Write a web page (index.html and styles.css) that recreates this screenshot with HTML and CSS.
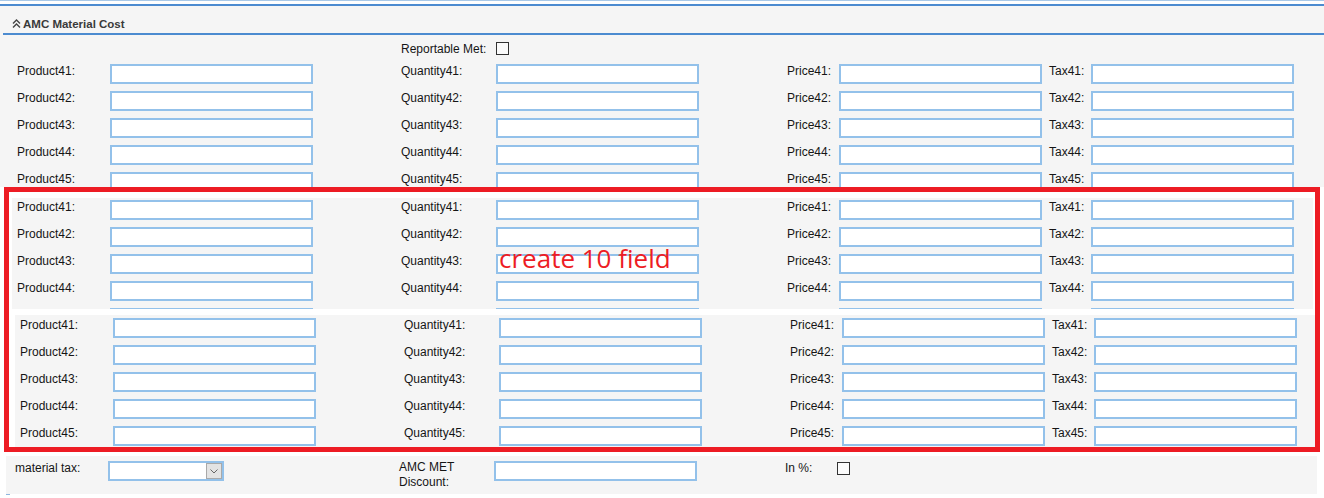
FILE: index.html
```html
<!DOCTYPE html>
<html>
<head>
<meta charset="utf-8">
<title>AMC Material Cost</title>
<link rel="stylesheet" href="styles.css">
</head>
<body>
<div class="topbar"></div>
<div class="section">
  <div class="hdr">
    <svg class="chev" width="9" height="9" viewBox="0 0 9 9"><path d="M1 4.5 L4.5 1 L8 4.5 M1 8.5 L4.5 5 L8 8.5" fill="none" stroke="#444" stroke-width="1.4"/></svg>
    <span>AMC Material Cost</span>
  </div>
  <div class="form-top">
    <div class="grid rep">
      <span class="lbl c3">Reportable Met:</span><span class="chk c4"></span>
    </div>
    <div class="grid">
      <span class="lbl">Product41:</span><span class="inp"></span><span class="lbl">Quantity41:</span><span class="inp"></span><span class="lbl">Price41:</span><span class="inp"></span><span class="lbl">Tax41:</span><span class="inp"></span>
      <span class="lbl">Product42:</span><span class="inp"></span><span class="lbl">Quantity42:</span><span class="inp"></span><span class="lbl">Price42:</span><span class="inp"></span><span class="lbl">Tax42:</span><span class="inp"></span>
      <span class="lbl">Product43:</span><span class="inp"></span><span class="lbl">Quantity43:</span><span class="inp"></span><span class="lbl">Price43:</span><span class="inp"></span><span class="lbl">Tax43:</span><span class="inp"></span>
      <span class="lbl">Product44:</span><span class="inp"></span><span class="lbl">Quantity44:</span><span class="inp"></span><span class="lbl">Price44:</span><span class="inp"></span><span class="lbl">Tax44:</span><span class="inp"></span>
      <span class="lbl">Product45:</span><span class="inp"></span><span class="lbl">Quantity45:</span><span class="inp"></span><span class="lbl">Price45:</span><span class="inp"></span><span class="lbl">Tax45:</span><span class="inp"></span>
    </div>
  </div>
</div>
<div class="redbox">
  <div class="panel pa">
    <div class="grid">
      <span class="lbl">Product41:</span><span class="inp"></span><span class="lbl">Quantity41:</span><span class="inp"></span><span class="lbl">Price41:</span><span class="inp"></span><span class="lbl">Tax41:</span><span class="inp"></span>
      <span class="lbl">Product42:</span><span class="inp"></span><span class="lbl">Quantity42:</span><span class="inp"></span><span class="lbl">Price42:</span><span class="inp"></span><span class="lbl">Tax42:</span><span class="inp"></span>
      <span class="lbl">Product43:</span><span class="inp"></span><span class="lbl">Quantity43:</span><span class="inp"></span><span class="lbl">Price43:</span><span class="inp"></span><span class="lbl">Tax43:</span><span class="inp"></span>
      <span class="lbl">Product44:</span><span class="inp"></span><span class="lbl">Quantity44:</span><span class="inp"></span><span class="lbl">Price44:</span><span class="inp"></span><span class="lbl">Tax44:</span><span class="inp"></span>
      <span class="lbl"></span><span class="inp"></span><span class="lbl"></span><span class="inp"></span><span class="lbl"></span><span class="inp"></span><span class="lbl"></span><span class="inp"></span>
    </div>
  </div>
  <div class="panel pb">
    <div class="grid">
      <span class="lbl">Product41:</span><span class="inp"></span><span class="lbl">Quantity41:</span><span class="inp"></span><span class="lbl">Price41:</span><span class="inp"></span><span class="lbl">Tax41:</span><span class="inp"></span>
      <span class="lbl">Product42:</span><span class="inp"></span><span class="lbl">Quantity42:</span><span class="inp"></span><span class="lbl">Price42:</span><span class="inp"></span><span class="lbl">Tax42:</span><span class="inp"></span>
      <span class="lbl">Product43:</span><span class="inp"></span><span class="lbl">Quantity43:</span><span class="inp"></span><span class="lbl">Price43:</span><span class="inp"></span><span class="lbl">Tax43:</span><span class="inp"></span>
      <span class="lbl">Product44:</span><span class="inp"></span><span class="lbl">Quantity44:</span><span class="inp"></span><span class="lbl">Price44:</span><span class="inp"></span><span class="lbl">Tax44:</span><span class="inp"></span>
      <span class="lbl">Product45:</span><span class="inp"></span><span class="lbl">Quantity45:</span><span class="inp"></span><span class="lbl">Price45:</span><span class="inp"></span><span class="lbl">Tax45:</span><span class="inp"></span>
    </div>
  </div>
  <div class="note">create 10 field</div>
</div>
<div class="bottom">
  <div class="grid">
    <span class="lbl">material tax:</span>
    <span class="sel"><span class="selbtn"><svg width="8" height="5" viewBox="0 0 8 5"><path d="M0.5 0.5 L4 4 L7.5 0.5" fill="none" stroke="#666" stroke-width="1"/></svg></span></span>
    <span class="lbl two">AMC MET<br>Discount:</span><span class="inp"></span>
    <span class="lbl">In %:</span><span class="chk low"></span>
  </div>
</div>
<div class="tick"></div>
</body>
</html>
```

FILE: styles.css
```css
html, body {
  margin: 0;
  padding: 0;
  background: #ffffff;
}
body {
  font-family: "Liberation Sans", Arial, sans-serif;
  font-size: 12px;
  color: #151515;
}
.topbar {
  height: 3px;
  border-top: 1px solid #a9c9e8;
  border-bottom: 2px solid #4c8bd0;
}
.section {
  background: #f5f5f5;
  height: 181px;
  overflow: hidden;
}
.hdr {
  margin-left: 3px;
  border-bottom: 2px solid #4c8bd0;
  display: flex;
  align-items: flex-start;
  padding-top: 11px;
  padding-left: 9px;
  box-sizing: border-box;
  height: 29px;
  font-weight: bold;
  font-size: 11.5px;
  line-height: 14px;
  color: #3a3a3a;
}
.chev {
  margin-top: 2px;
  margin-right: 2px;
}
.grid {
  display: grid;
  grid-template-columns: 93px 291px 95px 291px 52px 210px 42px 203px;
  grid-auto-rows: 20px;
  row-gap: 7px;
  padding-left: 5px;
}
.form-top {
  padding: 7px 0 0 12px;
}
.grid.rep {
  grid-auto-rows: 15px;
  margin-bottom: 7px;
}
.c3 { grid-column: 3; }
.c4 { grid-column: 4; }
.lbl {
  line-height: 14px;
  white-space: nowrap;
}
.inp {
  width: 203px;
  height: 20px;
  box-sizing: border-box;
  border: 2px solid #93c1ea;
  background: #ffffff;
}
.chk {
  width: 13px;
  height: 13px;
  box-sizing: border-box;
  border: 1px solid #333333;
  background: #fbfbfb;
}
.chk.low { margin-top: 1px; }
.redbox {
  position: relative;
  margin-left: 4px;
  width: 1316px;
  height: 265px;
  box-sizing: border-box;
  border: 5px solid #ed1c24;
  background: #ffffff;
}
.panel {
  background: #f5f5f5;
  overflow: hidden;
  box-sizing: border-box;
}
.pa {
  margin: 6px 0 0 3px;
  width: 1301px;
  height: 111px;
  padding-top: 2px;
}
.pb {
  margin: 6px 0 0 6px;
  width: 1300px;
  height: 132px;
  padding-top: 3px;
}
.note {
  position: absolute;
  left: 490px;
  top: 53px;
  font-family: "Open Sans", "Noto Sans", sans-serif;
  font-size: 26px;
  line-height: 26px;
  color: #ed1c24;
  white-space: nowrap;
}
.bottom {
  margin: 4px 0 0 6px;
  width: 1311px;
  height: 38px;
  background: #f5f5f5;
  box-sizing: border-box;
  padding-top: 5px;
}
.bottom .grid {
  padding-left: 9px;
}
.lbl.two {
  line-height: 15px;
  margin-top: -1px;
}
.sel {
  width: 116px;
  height: 20px;
  box-sizing: border-box;
  border: 2px solid #93c1ea;
  background: #ffffff;
  display: flex;
  justify-content: flex-end;
}
.selbtn {
  width: 16px;
  height: 16px;
  box-sizing: border-box;
  border: 1px solid #a9a9a9;
  background: #e3e3e3;
  display: flex;
  align-items: center;
  justify-content: center;
}
.tick {
  margin-left: 6px;
  width: 4px;
  height: 1px;
  background: #8fb6df;
}
```
